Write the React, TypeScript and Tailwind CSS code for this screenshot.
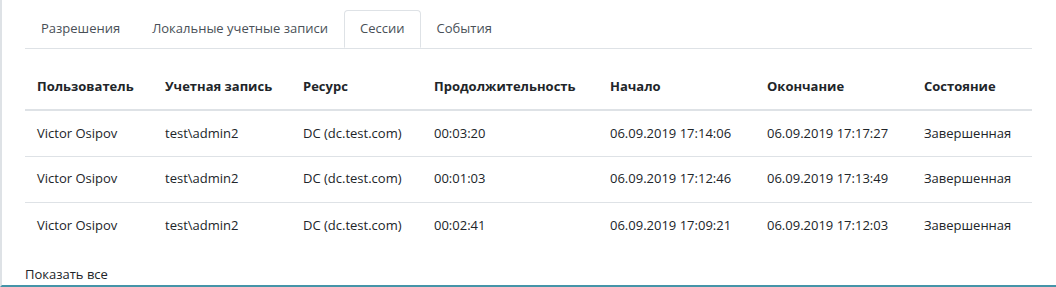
import React from 'react';

const tabs = ['Разрешения', 'Локальные учетные записи', 'Сессии', 'События'];

const columns = [
  { title: 'Пользователь', w: 'w-[128px]' },
  { title: 'Учетная запись', w: 'w-[138px]' },
  { title: 'Ресурс', w: 'w-[131px]' },
  { title: 'Продолжительность', w: 'w-[176px]' },
  { title: 'Начало', w: 'w-[157px]' },
  { title: 'Окончание', w: 'w-[157px]' },
  { title: 'Состояние', w: 'w-[120px]' },
];

const sessions = [
  ['Victor Osipov', 'test\\admin2', 'DC (dc.test.com)', '00:03:20', '06.09.2019 17:14:06', '06.09.2019 17:17:27', 'Завершенная'],
  ['Victor Osipov', 'test\\admin2', 'DC (dc.test.com)', '00:01:03', '06.09.2019 17:12:46', '06.09.2019 17:13:49', 'Завершенная'],
  ['Victor Osipov', 'test\\admin2', 'DC (dc.test.com)', '00:02:41', '06.09.2019 17:09:21', '06.09.2019 17:12:03', 'Завершенная'],
];

export default function App() {
  return (
    <div className="h-[287px] w-[1056px] overflow-hidden bg-white border-l-2 border-l-[#dee2e6] border-b-2 border-b-[#4594a8] font-['Open_Sans',sans-serif] text-[13px] text-[#212529]">
      <div className="pl-[23px] pr-[24px] pt-[10px]">
        {/* Tabs */}
        <div className="flex border-b border-[#dee2e6]">
          {tabs.map((t) => (
            <div
              key={t}
              className={
                t === 'Сессии'
                  ? 'h-[38px] px-[15px] mb-[-1px] flex items-center rounded-t-[4px] border border-[#dee2e6] border-b-white bg-white text-[#495057]'
                  : 'h-[38px] px-[15px] flex items-center border border-transparent text-[#495057]'
              }
            >
              {t}
            </div>
          ))}
        </div>

        {/* Sessions table */}
        <table className="mt-[16px] w-full border-collapse table-fixed">
          <thead>
            <tr className="border-b-2 border-[#dee2e6]">
              {columns.map((c) => (
                <th key={c.title} className={`${c.w} px-[12px] h-[45px] text-left font-bold`}>
                  {c.title}
                </th>
              ))}
            </tr>
          </thead>
          <tbody>
            {sessions.map((row, i) => (
              <tr key={i} className={i < sessions.length - 1 ? 'border-b border-[#dee2e6]' : ''}>
                {row.map((cell, j) => (
                  <td key={j} className="px-[12px] h-[46px] whitespace-nowrap">
                    {cell}
                  </td>
                ))}
              </tr>
            ))}
          </tbody>
        </table>

        <div className="mt-[16px] leading-[21px]">Показать все</div>
      </div>
    </div>
  );
}
